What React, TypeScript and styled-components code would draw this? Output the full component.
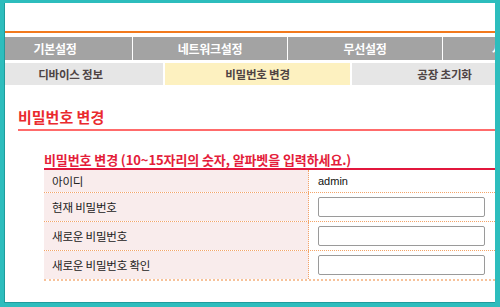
import React from "react";
import styled, { createGlobalStyle } from "styled-components";

const Global = createGlobalStyle`
  html, body { margin: 0; padding: 0; background: #2dbdbd; }
  body { font-family: "Noto Sans CJK KR", "Liberation Sans", sans-serif; }
  #root { width: 500px; height: 307px; }
`;

const KR = `"Noto Sans CJK KR", "Liberation Sans", sans-serif`;

const Frame = styled.div`
  width: 500px;
  height: 307px;
  box-sizing: border-box;
  padding: 3px 5px 4px 4px;
  background: #2dbdbd;
`;

const Screen = styled.div`
  height: 100%;
  box-sizing: border-box;
  background: #fff;
  overflow: hidden;
  border-left: 1px solid #1f9c9c;
  border-bottom: 1px solid #1f9c9c;
`;

const Header = styled.div`
  height: 28px;
  border-bottom: 2px solid #f27a1e;
`;

const MainNav = styled.div`
  display: flex;
  gap: 1px;
  margin: 4px 0 0 -27px;
  width: 800px;
`;

const MainTab = styled.div`
  flex: none;
  width: 154px;
  height: 23px;
  background: #a3a3a3;
  color: #fff;
  font: bold 12px/23px ${KR};
  letter-spacing: -0.3px;
  text-align: center;
`;

const SubNav = styled.div`
  display: flex;
  gap: 2px;
  margin: 3px 0 0 -27px;
  width: 800px;
`;

const SubTab = styled.div<{ $active?: boolean }>`
  flex: none;
  width: 185px;
  height: 22px;
  background: ${(p) => (p.$active ? "#fdf1c0" : "#e6e6e6")};
  color: #4f4444;
  font: bold 11.5px/22px ${KR};
  letter-spacing: -0.2px;
  text-align: center;
`;

const Content = styled.div`
  padding-left: 13px;
  margin-right: -80px;
`;

const Title = styled.h2`
  margin: 23px 0 0;
  padding-bottom: 3px;
  color: #ea2a2e;
  font: bold 15px/18px ${KR};
  border-bottom: 2px solid #ff6b6b;
`;

const Section = styled.div`
  margin: 21px 0 0 26px;
`;

const SectionTitle = styled.h3`
  margin: 0;
  color: #e41d3a;
  font: bold 13px/16px ${KR};
  letter-spacing: -0.1px;
  border-bottom: 2px solid #e2163c;
`;

const Row = styled.div<{ $last?: boolean }>`
  display: grid;
  grid-template-columns: 265px 1fr;
  border-bottom: ${(p) => (p.$last ? "2px dotted #f7c29a" : "1px dotted #f3a468")};
`;

const Label = styled.div`
  background: #f9ecec;
  border-right: 1px dotted #f3a468;
  padding-left: 8px;
  display: flex;
  align-items: center;
  color: #222;
  font: 11.5px/14px ${KR};
  letter-spacing: -0.2px;
`;

const Value = styled.div<{ $tall?: boolean }>`
  padding: 4px 9px;
  height: ${(p) => (p.$tall ? "20px" : "14px")};
  display: flex;
  align-items: center;
  color: #111;
  font: 11px/14px "Liberation Sans", Arial, sans-serif;
`;

const Field = styled.input`
  width: 167px;
  height: 20px;
  box-sizing: border-box;
  border: 1px solid #9a9a9a;
  border-radius: 2px;
  background: #fff;
  padding: 0 3px;
  margin: 0;
`;

const rows = ["현재 비밀번호", "새로운 비밀번호", "새로운 비밀번호 확인"];

export default function App() {
  return (
    <>
      <Global />
      <Frame>
        <Screen>
          <Header />
          <MainNav>
            <MainTab>기본설정</MainTab>
            <MainTab>네트워크설정</MainTab>
            <MainTab>무선설정</MainTab>
            <MainTab>시스템 관리</MainTab>
          </MainNav>
          <SubNav>
            <SubTab>디바이스 정보</SubTab>
            <SubTab $active>비밀번호 변경</SubTab>
            <SubTab>공장 초기화</SubTab>
          </SubNav>
          <Content>
            <Title>비밀번호 변경</Title>
            <Section>
              <SectionTitle>비밀번호 변경 (10~15자리의 숫자, 알파벳을 입력하세요.)</SectionTitle>
              <Row>
                <Label>아이디</Label>
                <Value>admin</Value>
              </Row>
              {rows.map((r, i) => (
                <Row key={r} $last={i === rows.length - 1}>
                  <Label>{r}</Label>
                  <Value $tall>
                    <Field type="password" />
                  </Value>
                </Row>
              ))}
            </Section>
          </Content>
        </Screen>
      </Frame>
    </>
  );
}
